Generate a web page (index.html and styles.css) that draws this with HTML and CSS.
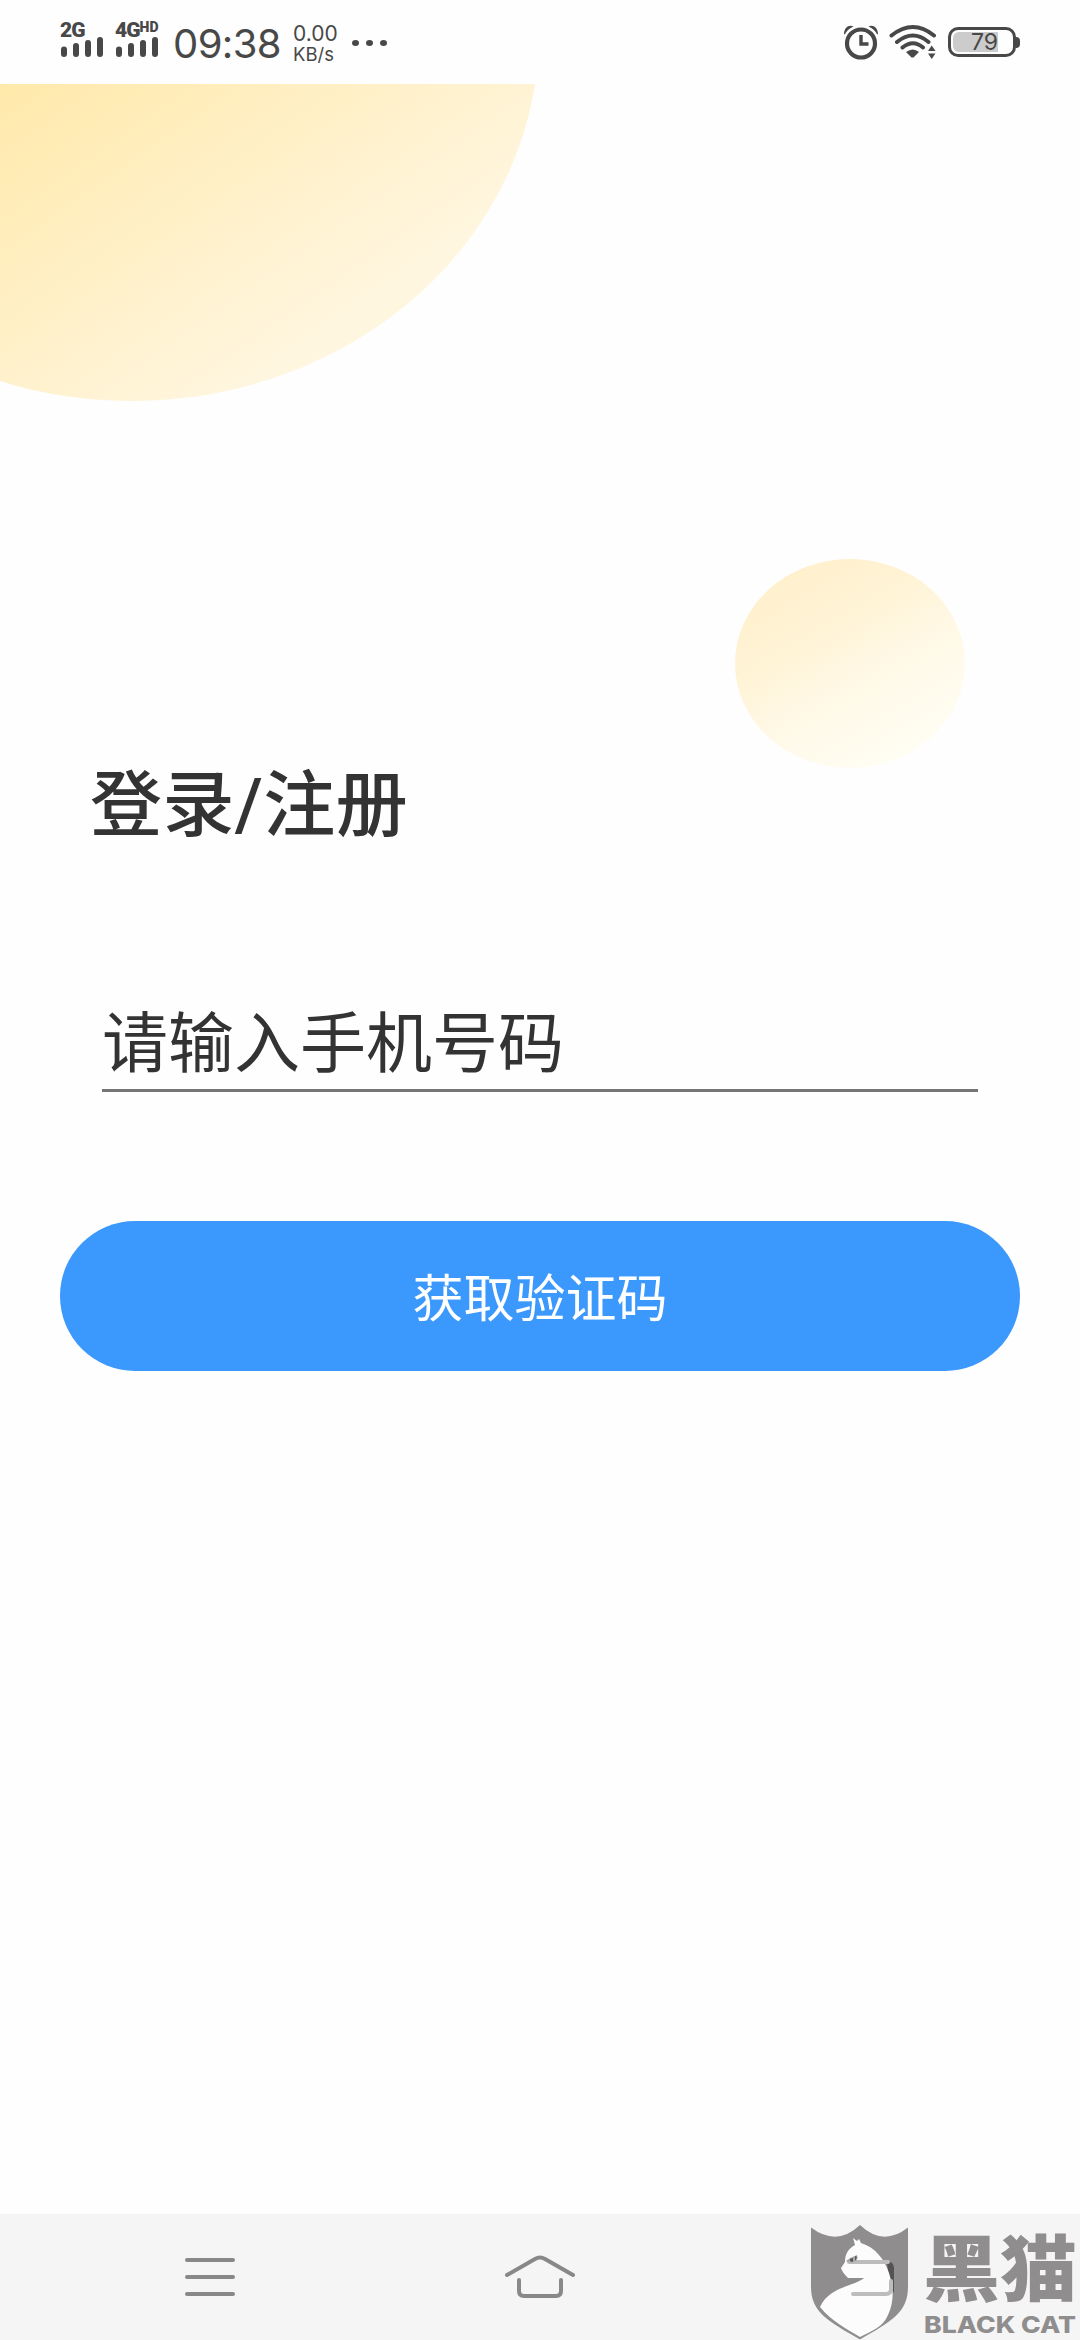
FILE: index.html
```html
<!DOCTYPE html>
<html lang="zh-CN">

<head>
  <meta charset="UTF-8">
  <meta name="viewport" content="width=device-width, initial-scale=1.0">
  <title>登录/注册</title>
  <link rel="stylesheet" href="styles.css">
</head>

<body>
  <header class="status-bar">
    <div class="signal">
      <span class="network">2G</span>
      <svg width="44" height="20" viewBox="0 0 44 20">
        <path d="M4 12.500v4.500M16 9v8M28 6v11M40 3v14" />
      </svg>
    </div>
    <div class="signal">
      <span class="network">4G<sup>HD</sup></span>
      <svg width="44" height="20" viewBox="0 0 44 20">
        <path d="M4 12.500v4.500M16 9v8M28 6v11M40 3v14" />
      </svg>
    </div>
    <span class="time">09:38</span>
    <div class="speed"><span>0.00</span><span class="unit">KB/s</span></div>
    <div class="dots"><i></i><i></i><i></i></div>

    <div class="status-right">
      <svg class="alarm" width="36" height="36" viewBox="0 0 36 36">
        <circle cx="18" cy="19.500" r="14" fill="none" stroke="#484848" stroke-width="4.200" />
        <path d="M18 11v9h7.500" fill="none" stroke="#484848" stroke-width="3.400" />
        <path d="M1 10C1 4 6 0 10.500 2.500Q4.500 5 1.800 10.500zM35 10C35 4 30 0 25.500 2.500Q31.500 5 34.200 10.500z" fill="#484848" />
      </svg>
      <svg class="wifi" width="48" height="36" viewBox="0 0 48 36">
        <path d="M2.500 11.500Q24 -5.500 45 11.500M8 18Q24 5 39.500 18M13.500 23.500Q24 15 34 23.500" fill="none" stroke="#484848" stroke-width="4" stroke-linecap="round" />
        <path d="M17 28Q24 23 30 28L24.500 33.500H22.500z" fill="#484848" />
        <path d="M39 27L42.700 21.500L46.500 27zM39 29.500L42.700 35L46.500 29.500z" fill="#484848" />
      </svg>
      <div class="battery"><span>79</span></div>
    </div>
  </header>

  <main class="page">
    <div class="bubble bubble-large"></div>
    <div class="bubble bubble-small"></div>

    <h1>登录/注册</h1>

    <form id="loginForm">
      <input type="tel" id="phone" name="phone" placeholder="请输入手机号码">
      <button type="button" class="code-btn">获取验证码</button>
    </form>
  </main>

  <nav class="nav-bar">
    <svg width="50" height="40" viewBox="0 0 50 40">
      <path d="M2 3H48M2 20H48M2 37H48" />
    </svg>
    <svg width="70" height="44" viewBox="0 0 70 44">
      <path d="M2 20L30 4Q35 1 40 4L68 20M14 25V36Q14 41 19 41H51Q56 41 56 36V25" />
    </svg>
    <svg width="50" height="40" viewBox="0 0 50 40">
      <path d="M2 3H40Q46 3 46 9V28Q46 35 40 35H8" />
    </svg>
  </nav>

  <div class="watermark">
    <svg width="98" height="115" viewBox="0 0 98 115">
      <path d="M0 2.500Q26 22 49 0Q72 22 97 2.500V62C97 88 79 97 49 114.500C19 97 0 88 0 62z" fill="#8f8d8d" />
      <path d="M76 36Q83 37 83 43V68L78 60z" fill="#545252" />
      <path class="cat" d="M42 13L46 16L48 14L50 18C64 22 74 35 78 48C83 64 83 77 77 90C72 102 61 106 49 112C36 104 20 96 9 82C16 66 34 62 44 58Q51 55 53 53H37Q31 47 30 43L34 37C34 29 37 24 44 20z" />
      <path d="M42 69H75Q80 69 80 64V56M77 37H38" fill="none" stroke="#bdbdbd" stroke-width="4" stroke-linecap="round" />
      <path d="M35 36L39 33L46 30Q48 35 43 37Q38 39 35 36z" fill="#aaa" />
      <path d="M39 34L42 33V37L39 36zM44 31L46 32L44 36z" fill="#555" />
    </svg>
    <svg class="brand" width="154" height="115" viewBox="0 0 154 115">
      <text class="brand-cn" x="-1" y="70" textLength="154" lengthAdjust="spacingAndGlyphs">黑猫</text>
      <text class="brand-en" x="0" y="108" textLength="152" lengthAdjust="spacingAndGlyphs">BLACK CAT</text>
    </svg>
  </div>
</body>

</html>
```
FILE: styles.css
```css
* {
  margin: 0;
  padding: 0;
  box-sizing: border-box;
}

body {
  font-family: Roboto, 'Noto Sans CJK SC', sans-serif;
  background: #fefefe;
  height: 2340px;
  display: flex;
  flex-direction: column;
  color: #333;
  position: relative;
  overflow: hidden;
}

svg {
  display: block;
  flex-shrink: 0;
}

/* 状态栏 */
.status-bar {
  height: 84px;
  padding: 0 60px;
  display: flex;
  align-items: flex-start;
  color: #484848;
}

.signal {
  width: 46px;
  margin: 20px 9px 0 0;
}

.signal svg path {
  stroke: #484848;
  stroke-width: 6;
  stroke-linecap: round;
}

.network {
  display: block;
  height: 17px;
  font-family: Roboto, sans-serif;
  font-size: 21px;
  line-height: 20px;
  font-weight: 900;
  letter-spacing: -1px;
  white-space: nowrap;
}

.network sup {
  font-size: 14px;
  line-height: 0;
  vertical-align: 5px;
  letter-spacing: 0.2px;
}

.time {
  width: 108px;
  margin: 19px 0 0 3px;
  font-family: Inter, sans-serif;
  font-size: 40px;
  line-height: 50px;
  letter-spacing: -0.6px;
}

.speed {
  margin: 24px 0 0 12px;
  width: 47px;
  font-family: Inter, sans-serif;
  font-size: 21px;
  line-height: 20px;
}

.speed span {
  display: block;
}

.speed .unit {
  font-size: 18.500px;
}

.dots {
  display: flex;
  gap: 7px;
  margin: 40px 0 0 12px;
}

.dots i {
  width: 7px;
  height: 6px;
  border-radius: 50%;
  background: #484848;
}

.status-right {
  display: flex;
  margin-left: auto;
  margin-top: 24px;
}

.wifi {
  margin-left: 10px;
}

.battery {
  position: relative;
  width: 68px;
  height: 30px;
  margin: 3px 4px 0 11px;
  padding: 3px;
  border: 3px solid #484848;
  border-radius: 10px;
}

.battery::after {
  content: '';
  position: absolute;
  right: -7px;
  top: 7px;
  width: 4px;
  height: 11px;
  border-radius: 0 4px 4px 0;
  background: #484848;
}

.battery span {
  display: block;
  width: 45px;
  height: 20px;
  margin: -1px;
  border-radius: 6px 0 0 6px;
  background: #ccc;
  font-family: Inter, sans-serif;
  font-size: 23px;
  line-height: 20px;
  text-align: right;
}

/* 登录页 */
.page {
  position: relative;
  flex: 1;
  padding: 670px 60px 0;
  overflow: hidden;
}

.bubble {
  position: absolute;
  border-radius: 50%;
}

.bubble-large {
  left: -275px;
  top: -419px;
  width: 814px;
  height: 736px;
  background: linear-gradient(145deg, #ffdf80 18%, #ffe7a3 42%, #fff6e0 84%);
}

.bubble-small {
  left: 735px;
  top: 475px;
  width: 230px;
  height: 209px;
  background: linear-gradient(150deg, #fff0cc 10%, #fff3d5 34%, #fff9e8 60%, #fffef4 88%);
}

h1 {
  position: relative;
  margin-left: 30px;
  font-size: 72px;
  line-height: 104px;
  font-weight: 500;
  letter-spacing: 0.4px;
}

input {
  display: block;
  width: 876px;
  height: 104px;
  margin: 130px 0 0 42px;
  padding-top: 12px;
  border: none;
  border-bottom: 3px solid #757575;
  background: none;
  font-family: inherit;
  font-size: 66px;
  color: #333;
  outline: none;
}

input::placeholder {
  color: #333;
}

.code-btn {
  display: block;
  width: 960px;
  height: 150px;
  margin-top: 129px;
  padding-bottom: 3px;
  border: none;
  border-radius: 75px;
  background: #3b98fc;
  color: #fff;
  font-family: inherit;
  font-size: 51px;
}

/* 底部导航 */
.nav-bar {
  height: 126px;
  padding: 0 185px;
  display: flex;
  justify-content: space-between;
  align-items: center;
  background: #f5f5f5;
}

.nav-bar path {
  fill: none;
  stroke: #888;
  stroke-width: 4;
  stroke-linecap: round;
}

/* 水印 */
.watermark {
  position: absolute;
  left: 811px;
  bottom: 0;
  display: flex;
  gap: 15px;
}

.cat {
  fill: #fcfcfc;
}

.brand {
  fill: #8f8d8d;
  overflow: visible;
}

.brand-cn {
  font-family: 'Noto Sans CJK SC', sans-serif;
  font-size: 72px;
  font-weight: 900;
}

.brand-en {
  font-family: Inter, sans-serif;
  font-size: 23px;
  font-weight: 800;
}
```
